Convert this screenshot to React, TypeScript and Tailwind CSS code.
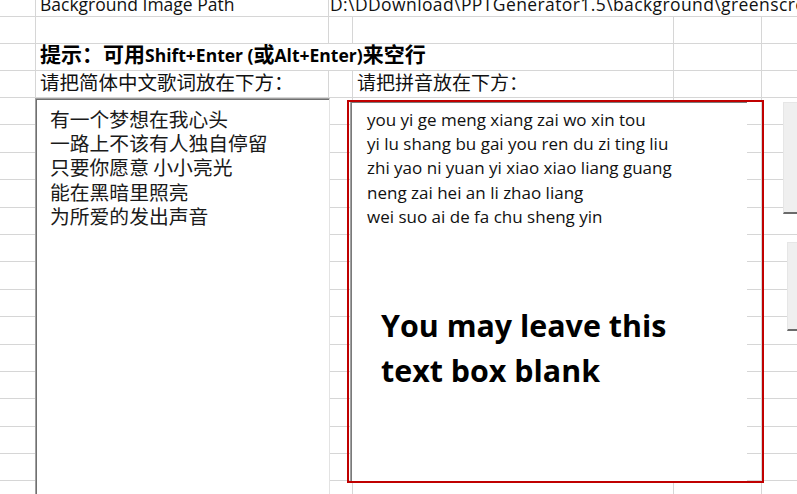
import React from "react";

const G = "border-[#d6d6d6]";

function BodyRow() {
  return (
    <div className="flex h-[27.4px] shrink-0">
      <div className={`w-[36px] shrink-0 border-r border-b ${G}`} />
      <div className={`w-[293px] shrink-0 border-r border-b ${G}`} />
      <div className={`w-[24px] shrink-0 border-r border-b ${G}`} />
      <div className={`w-[321px] shrink-0 border-r border-b ${G}`} />
      <div className={`w-[88px] shrink-0 border-r border-b ${G}`} />
      <div className={`flex-1 border-b ${G}`} />
    </div>
  );
}

export default function App() {
  const lyrics = [
    "有一个梦想在我心头",
    "一路上不该有人独自停留",
    "只要你愿意 小小亮光",
    "能在黑暗里照亮",
    "为所爱的发出声音",
  ];
  const pinyin = [
    "you yi ge meng xiang zai wo xin tou",
    "yi lu shang bu gai you ren du zi ting liu",
    "zhi yao ni yuan yi xiao xiao liang guang",
    "neng zai hei an li zhao liang",
    "wei suo ai de fa chu sheng yin",
  ];
  return (
    <div className="relative w-[797px] h-[494px] overflow-hidden bg-white text-[#111] font-['Open_Sans','Noto_Sans_CJK_SC',sans-serif]">
      {/* spreadsheet grid */}
      <div className="flex flex-col">
        {/* row 1 */}
        <div className="flex h-[17px] shrink-0">
          <div className={`w-[36px] shrink-0 border-r border-b ${G}`} />
          <div className={`w-[293px] shrink-0 border-r border-b ${G} flex items-end pl-[4px]`}>
            <span className="whitespace-nowrap text-[17.5px] leading-[24px]">Background Image Path</span>
          </div>
          <div className={`flex-1 border-b ${G} flex items-end pl-[1px] overflow-visible`}>
            <span className="whitespace-nowrap text-[17.5px] leading-[24px] tracking-[0.4px]">
              D:\DDownload\PPTGenerator1.5\background\greenscreen.jpg
            </span>
          </div>
        </div>
        {/* row 2 */}
        <div className="flex h-[27px] shrink-0">
          <div className={`w-[36px] shrink-0 border-r border-b ${G}`} />
          <div className={`w-[293px] shrink-0 border-r border-b ${G}`} />
          <div className={`w-[24px] shrink-0 border-r border-b ${G}`} />
          <div className={`w-[321px] shrink-0 border-r border-b ${G}`} />
          <div className={`w-[88px] shrink-0 border-r border-b ${G}`} />
          <div className={`flex-1 border-b ${G}`} />
        </div>
        {/* row 3 */}
        <div className="flex h-[27px] shrink-0">
          <div className={`w-[36px] shrink-0 border-r border-b ${G}`} />
          <div className={`w-[638px] shrink-0 border-r border-b ${G} flex items-end pl-[4px] pb-[2px]`}>
            <span className="whitespace-nowrap font-bold leading-[24px] text-[#000]">
              <span className="text-[21px]">提示：可用</span>
              <span className="text-[17.5px]">Shift+Enter (</span>
              <span className="text-[21px]">或</span>
              <span className="text-[17.5px]">Alt+Enter)</span>
              <span className="text-[21px]">来空行</span>
            </span>
          </div>
          <div className={`w-[88px] shrink-0 border-r border-b ${G}`} />
          <div className={`flex-1 border-b ${G}`} />
        </div>
        {/* row 4 */}
        <div className="flex h-[27px] shrink-0">
          <div className={`w-[36px] shrink-0 border-r border-b ${G}`} />
          <div className={`w-[293px] shrink-0 border-r border-b ${G} flex items-end pl-[4px] pb-[2px]`}>
            <span className="whitespace-nowrap text-[19.5px] leading-[24px]">请把简体中文歌词放在下方：</span>
          </div>
          <div className={`w-[24px] shrink-0 border-r border-b ${G}`} />
          <div className={`w-[321px] shrink-0 border-r border-b ${G} flex items-end pl-[4px] pb-[2px]`}>
            <span className="whitespace-nowrap text-[19px] leading-[24px]">请把拼音放在下方：</span>
          </div>
          <div className={`w-[88px] shrink-0 border-r border-b ${G}`} />
          <div className={`flex-1 border-b ${G}`} />
        </div>
        {Array.from({ length: 15 }).map((_, i) => (
          <BodyRow key={i} />
        ))}
      </div>

      {/* left text box (lyrics) */}
      <div className="absolute left-[35px] top-[98px] w-[295px] h-[410px] bg-white border-t border-l border-[#a0a0a0] border-r border-r-[#e3e3e3]">
        <div className="h-full border-t border-l border-[#707070] pt-[7px] pl-[13px]">
          {lyrics.map((l) => (
            <div key={l} className="text-[19.8px] leading-[24.2px] whitespace-nowrap text-[#1a1a1a] font-['Noto_Sans_CJK_SC',sans-serif]">
              {l}
            </div>
          ))}
        </div>
      </div>

      {/* right text box (pinyin) */}
      <div className="absolute left-[350px] top-[101px] w-[397px] h-[381px] bg-white border-t border-l border-[#a0a0a0]">
        <div className="h-full border-t border-l border-[#7a7a7a] pt-[5px] pl-[15px]">
          {pinyin.map((l) => (
            <div key={l} className="text-[17px] leading-[24.2px] whitespace-nowrap">
              {l}
            </div>
          ))}
          <div className="mt-[74px] pl-[14px] text-[30.4px] leading-[45px] font-bold text-black">
            <div>You may leave this</div>
            <div>text box blank</div>
          </div>
        </div>
      </div>

      {/* red rectangle */}
      <div className="absolute left-[347px] top-[100px] w-[417px] h-[383px] border-2 border-[#c00000]" />

      {/* partially visible buttons */}
      <div className="absolute left-[783px] top-[102px] w-[20px] h-[112px] bg-[#efefef] border-t border-l border-[#e6e6e6] border-b-2 border-b-[#6b6b6b]" />
      <div className="absolute left-[787px] top-[242px] w-[20px] h-[89px] bg-[#efefef] border-t border-l border-[#e6e6e6] border-b-2 border-b-[#6b6b6b]" />
    </div>
  );
}
